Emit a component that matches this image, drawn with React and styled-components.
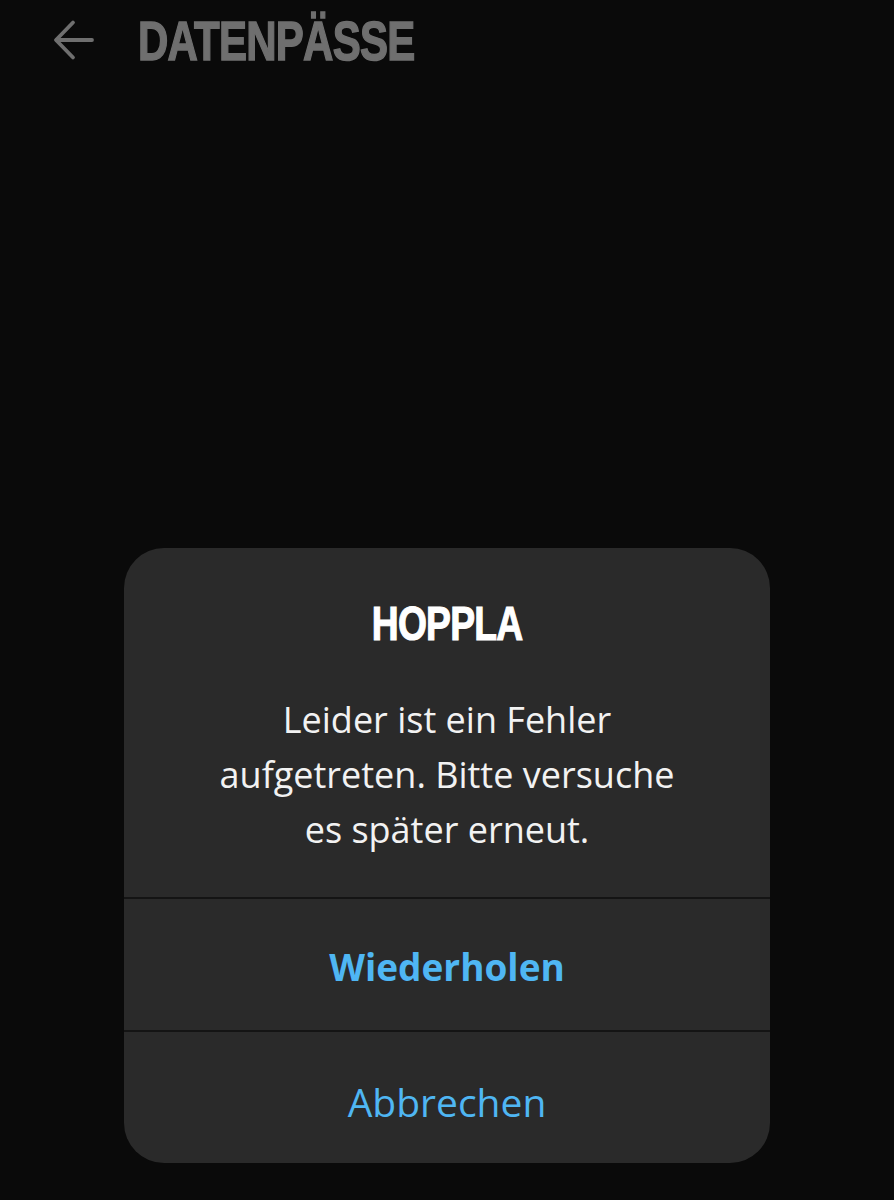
import styled, { createGlobalStyle } from 'styled-components'

const GlobalStyle = createGlobalStyle`
    html, body {
        margin: 0;
        padding: 0;
        background: #0a0a0a;
    }
`

const Screen = styled.main`
    width: 894px;
    height: 1200px;
    display: flex;
    flex-direction: column;
    background: #0a0a0a;
    font-family: 'Open Sans', 'Noto Sans', sans-serif;
    overflow: hidden;
`

const TopBar = styled.header`
    height: 80px;
    display: flex;
    align-items: center;
    padding-left: 53px;
    gap: 43px;
`

const BackButton = styled.button`
    background: none;
    border: none;
    padding: 0;
    width: 42px;
    height: 42px;
    display: flex;
    align-items: center;
    justify-content: center;
    color: #6f6f6f;
`

// heavy condensed display type, squeezed from Liberation Sans Bold
const PageTitle = styled.h1`
    margin: 0;
    font-family: 'Liberation Sans', Arial, sans-serif;
    font-weight: 700;
    font-size: 56px;
    letter-spacing: -1px;
    color: #6f6f6f;
    -webkit-text-stroke: 1.5px #6f6f6f;
    transform: scaleX(0.75);
    transform-origin: left center;
`

const Backdrop = styled.div`
    flex: 1;
    display: flex;
    align-items: flex-end;
    justify-content: center;
    padding-bottom: 37px;
`

const Dialog = styled.section`
    width: 646px;
    background: #2a2a2a;
    border-radius: 40px;
    overflow: hidden;
    display: flex;
    flex-direction: column;
`

const Content = styled.div`
    height: 351px;
    box-sizing: border-box;
    padding-top: 47px;
    display: flex;
    flex-direction: column;
    align-items: center;
    border-bottom: 2px solid #141414;
`

const DialogTitle = styled.h2`
    margin: 0 0 41px;
    font-family: 'Liberation Sans', Arial, sans-serif;
    font-weight: 700;
    font-size: 49px;
    line-height: 56px;
    letter-spacing: -1px;
    color: #ffffff;
    -webkit-text-stroke: 1.2px #ffffff;
    transform: scaleX(0.76);
`

const Message = styled.p`
    margin: 0;
    width: 470px;
    text-align: center;
    font-size: 36px;
    line-height: 55px;
    color: #f2f2f2;
`

const Action = styled.button`
    height: ${p => (p.$last ? '131px' : '133px')};
    box-sizing: border-box;
    padding: ${p => (p.$last ? '8px 0 0' : '4px 0 0')};
    background: none;
    border: none;
    border-bottom: ${p => (p.$last ? 'none' : '2px solid #141414')};
    font-family: 'Open Sans', 'Noto Sans', sans-serif;
    font-size: ${p => (p.$primary ? '37px' : '39px')};
    font-weight: ${p => (p.$primary ? 700 : 400)};
    color: #4fb6f3;
    display: flex;
    align-items: center;
    justify-content: center;
`

const ArrowLeft = () => (
    <svg width="42" height="42" viewBox="0 0 42 42" fill="none" stroke="currentColor" strokeWidth="3.8" strokeLinecap="round" strokeLinejoin="round">
        <path d="M39 21H3.5" />
        <path d="M20 3.5L3 21L20 38.5" />
    </svg>
)

const App = () => {
    return (
        <Screen>
            <GlobalStyle />
            <TopBar>
                <BackButton aria-label="Zurück">
                    <ArrowLeft />
                </BackButton>
                <PageTitle>DATENPÄSSE</PageTitle>
            </TopBar>

            <Backdrop>
                <Dialog role="alertdialog">
                    <Content>
                        <DialogTitle>HOPPLA</DialogTitle>
                        <Message>Leider ist ein Fehler aufgetreten. Bitte versuche es später erneut.</Message>
                    </Content>
                    <Action $primary>Wiederholen</Action>
                    <Action $last>Abbrechen</Action>
                </Dialog>
            </Backdrop>
        </Screen>
    )
}

export default App
